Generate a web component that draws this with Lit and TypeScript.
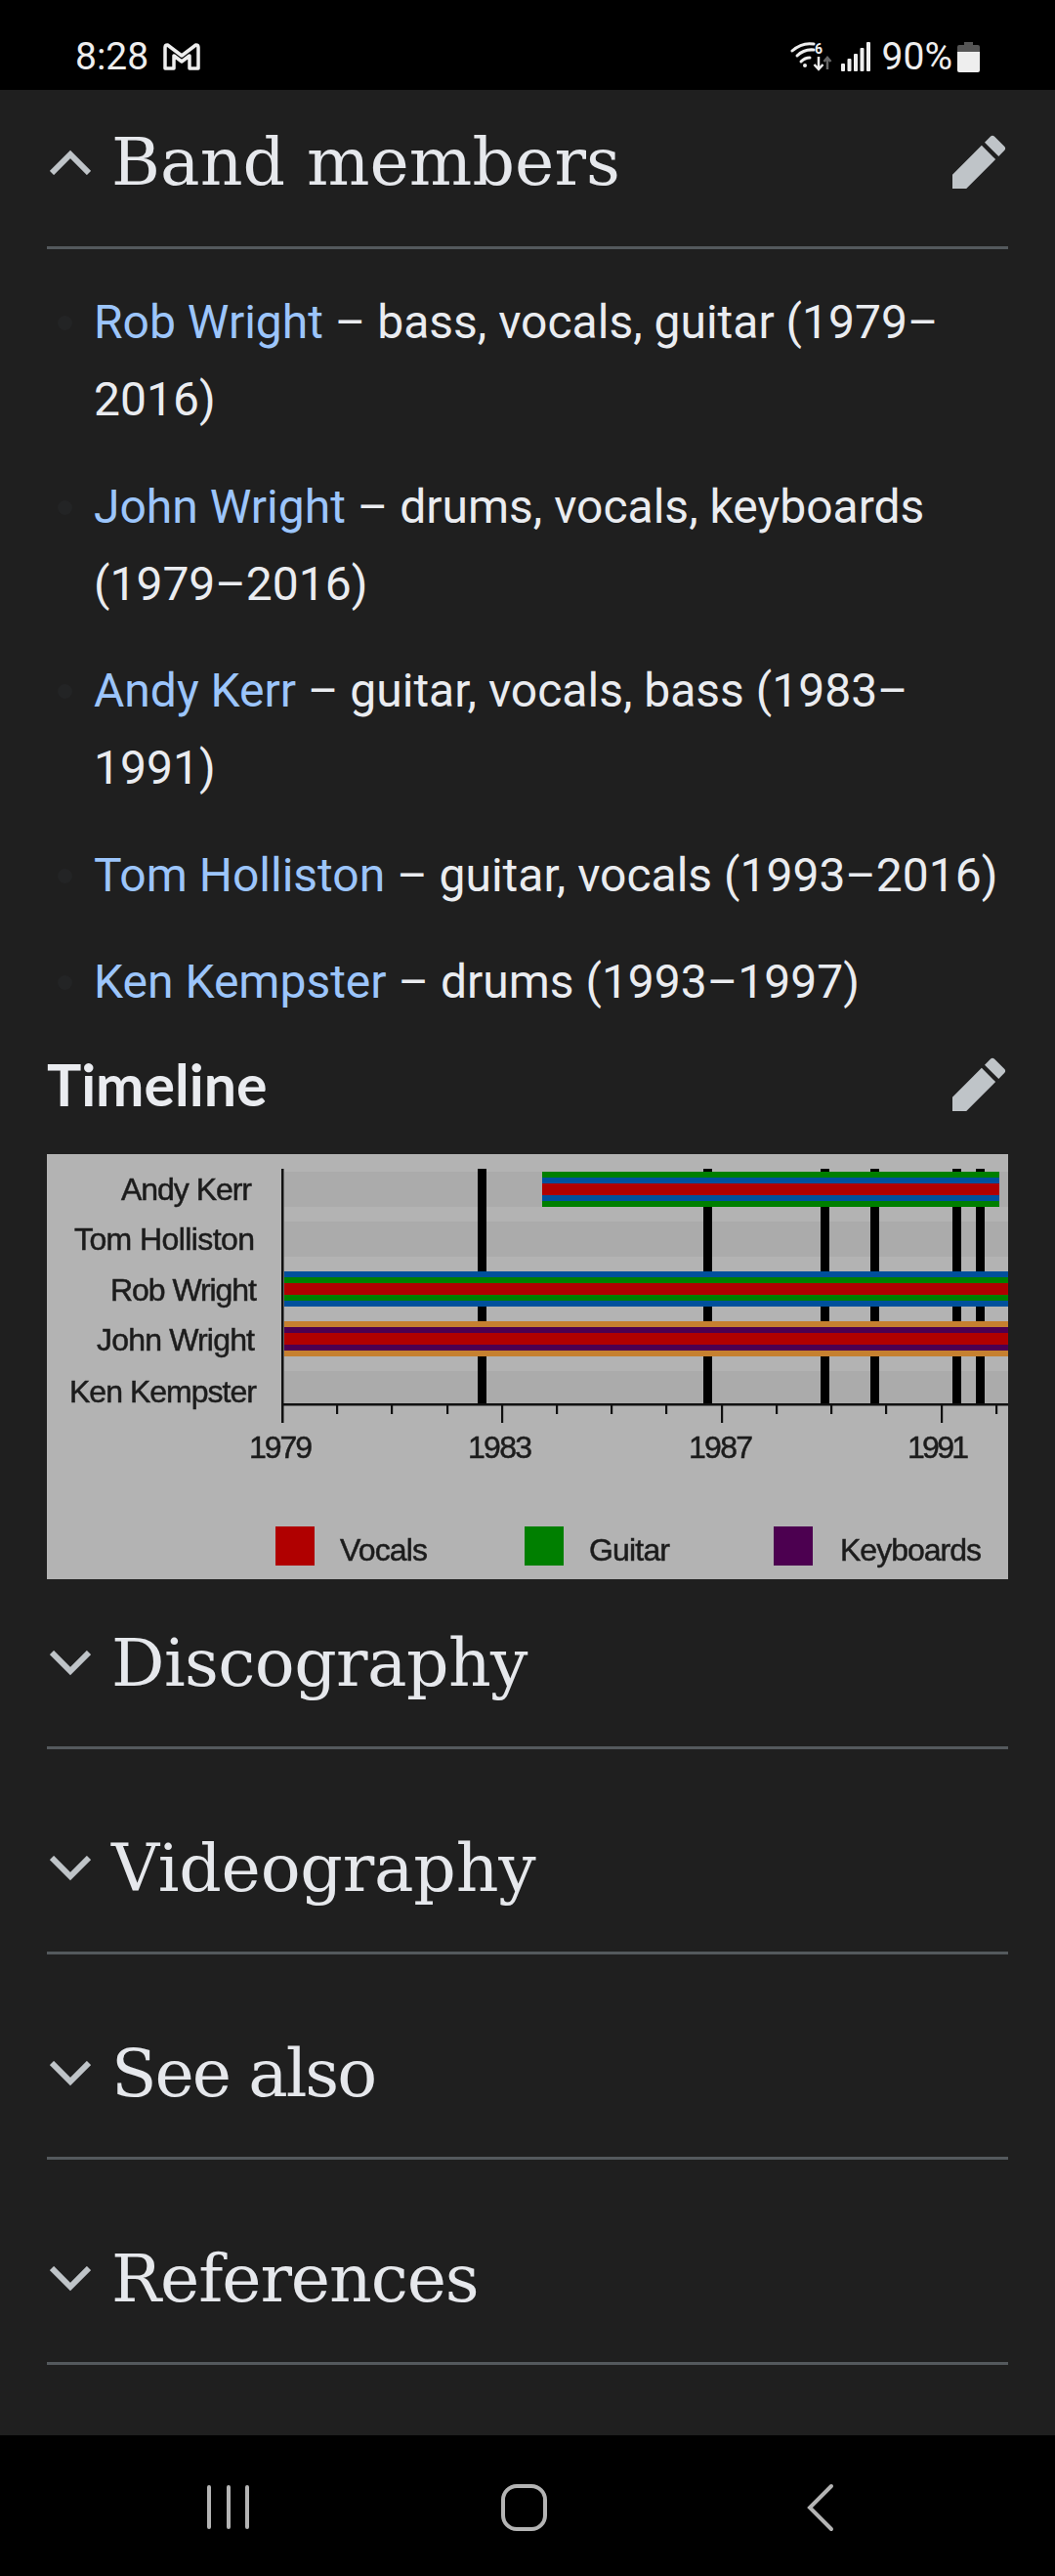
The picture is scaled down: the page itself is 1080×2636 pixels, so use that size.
import { LitElement, html, css, svg } from "lit";
import { customElement } from "lit/decorators.js";

const PENCIL = html`<svg class="pencil" viewBox="0 0 20 20"><path fill="#bfc4c8" d="M16.77 8l1.94-2a1 1 0 000-1.41l-3.34-3.3a1 1 0 00-1.41 0L12 3.23zm-5.81-3.71L1 14.25V19h4.75l9.96-9.96z"/></svg>`;
const chevron = (up: boolean) => html`<svg class="chev" viewBox="0 0 42 26"><path fill="none" stroke="#bfc4c8" stroke-width="6" d="${up ? "M2 24 21 5 40 24" : "M2 2 21 21 40 2"}"/></svg>`;

const members: [string, string][] = [
  ["Rob Wright", " – bass, vocals, guitar (1979–2016)"],
  ["John Wright", " – drums, vocals, keyboards (1979–2016)"],
  ["Andy Kerr", " – guitar, vocals, bass (1983–1991)"],
  ["Tom Holliston", " – guitar, vocals (1993–2016)"],
  ["Ken Kempster", " – drums (1993–1997)"],
];

const RED = "#b00000", GREEN = "#007f00", BLUE = "#00509c", ORANGE = "#c6802f", PURPLE = "#4c0050";
const stripes = (x: number, w: number, y: number, c: string[]) => {
  const hs = [6, 6, 12, 6, 6];
  let yy = y;
  return c.map((col, i) => {
    const r = svg`<rect x=${x} y=${yy} width=${w} height=${hs[i]} fill=${col} />`;
    yy += hs[i];
    return r;
  });
};
const names: [string, number, number][] = [
  ["Andy Kerr", 76, 47], ["Tom Holliston", 28, 98], ["Rob Wright", 65, 150], ["John Wright", 51, 201], ["Ken Kempster", 23, 254],
];
const nameW = [134, 185, 150, 162, 192];
const years: [string, number, number][] = [["1979", 207, 65], ["1983", 431, 66], ["1987", 657, 66], ["1991", 881, 63]];
const legend: [string, string, number, number, number][] = [
  ["Vocals", RED, 234, 300, 90], ["Guitar", GREEN, 489, 555, 83], ["Keyboards", PURPLE, 744, 812, 145],
];

const chart = html`<svg class="chart" viewBox="0 0 984 435" role="img">
  ${[[18, 36], [69, 36], [222, 34]].map(([y, h]) => svg`<rect x="243" y=${y} width="741" height=${h} fill="#ababab" />`)}
  ${[441, 672, 792, 843, 927, 951].map((x) => svg`<rect x=${x} y="15" width="9" height="241" fill="#000" />`)}
  ${stripes(507, 468, 18, [GREEN, BLUE, RED, BLUE, GREEN])}
  ${stripes(243, 741, 120, [BLUE, GREEN, RED, GREEN, BLUE])}
  ${stripes(243, 741, 171, [ORANGE, PURPLE, RED, PURPLE, ORANGE])}
  <rect x="240" y="15" width="2.5" height="260" fill="#111" />
  <rect x="240" y="255" width="744" height="2.5" fill="#111" />
  ${[297, 353, 410, 466, 522, 578, 634, 691, 747, 803, 859, 916, 972].map((x, i) =>
    svg`<rect x=${x - 1} y="256" width="2.2" height=${i === 3 || i === 7 || i === 11 ? 19 : 10} fill="#111" />`)}
  ${names.map(([t, x, y], i) => svg`<text class="ct" x=${x} y=${y} textLength=${nameW[i]} lengthAdjust="spacing">${t}</text>`)}
  ${years.map(([t, x, w]) => svg`<text class="ct" x=${x} y="311" textLength=${w} lengthAdjust="spacing">${t}</text>`)}
  ${legend.map(([t, c, sx, tx, w]) => svg`<rect x=${sx} y="381" width="40" height="40" fill=${c} />
    <text class="ct" x=${tx} y="416" textLength=${w} lengthAdjust="spacing">${t}</text>`)}
</svg>`;

const title = (t: string, tracking: number) => html`<h2 style="letter-spacing:${tracking}px">${t}</h2>`;
const closed: [string, number][] = [["Videography", -0.2], ["See also", -2.1], ["References", -1.1]];

@customElement("app-root")
export class AppRoot extends LitElement {
  static styles = css`
    :host { display: block; width: 1080px; height: 2636px; background: #000; overflow: hidden; }
    .page { display: flex; flex-direction: column; height: 2636px; }

    .status { height: 92px; flex: none; background: #000; color: #eee; display: flex; align-items: center;
      justify-content: space-between; padding: 24px 77px 0 77px; box-sizing: border-box;
      font: 400 39px/1 Roboto, sans-serif; }
    .status-l, .status-r { display: flex; align-items: center; }
    .gmail { width: 38px; height: 28px; margin-left: 15px; }
    .wifi { width: 46px; height: 32px; margin-right: 6px; }
    .six { font: 700 14px Roboto, sans-serif; }
    .signal { width: 30px; height: 30px; margin-right: 12px; }
    .batt { width: 23px; height: 31px; margin-left: 5px; }

    .main { flex: 1; background: #1f1f1f; padding: 0 48px; box-sizing: border-box; }
    .head { display: flex; align-items: center; height: 171px; box-sizing: border-box;
      color: #e6e8ec; }
    .head.first { height: 160px; padding-bottom: 12px; }
    .rule { height: 3px; background: #54595d; }
    .chev { width: 42px; height: 26px; flex: none; margin: 0 21px 0 3px; }
    h2 { flex: 1; margin: 0; font: 400 68px/1 "DejaVu Serif", serif; }
    .pencil { width: 60px; height: 60px; flex: none; display: block; }
    .section { margin-top: 36px; }
    .section.tight { margin-top: 0; }

    ul { margin: 35px 0 0; padding: 0 0 0 48px; list-style: disc;
      font: 400 48px/79px Roboto, sans-serif; color: #eaecf0; }
    li { margin-bottom: 30.5px; }
    li:last-child { margin-bottom: 0; }
    li::marker { color: #232425; }
    a { color: #9cc5fb; text-decoration: none; }

    .tl-head { display: flex; align-items: center; justify-content: space-between; height: 92px; margin-top: 20px; }
    h3 { margin: 0 0 2px; font: 700 59px/1 Lato, sans-serif; color: #eaecf0; }
    .chart-wrap { margin-top: 25px; height: 435px; background: #b3b3b3; overflow: hidden; }
    .chart { display: block; width: 984px; height: 435px; filter: blur(0.7px); }
    .ct { font: 400 32px "Liberation Sans", sans-serif; fill: #1c1c1c; stroke: #1c1c1c; stroke-width: 0.5px; }

    .nav { height: 144px; flex: none; background: #000; display: flex; align-items: center; }
    .nav svg { display: block; width: 1080px; height: 144px; }
  `;

  render() {
    return html`<div class="page">
      <div class="status">
        <div class="status-l">
          <span>8:28</span>
          <svg class="gmail" viewBox="0 0 38 28"><path fill="none" stroke="#eee" stroke-width="3.5" stroke-linejoin="round" d="M2 26V4.500Q2 2 4.500 2L19 13 33.500 2Q36 2 36 4.500V26H27V13L19 19 11 13V26Z"/></svg>
        </div>
        <div class="status-r">
          <svg class="wifi" viewBox="0 0 46 32">
            <g fill="none" stroke="#eee" stroke-width="3" stroke-linecap="round">
              <path d="M2 10Q12 1 24 3"/><path d="M7 15Q14 8 24 9"/><path d="M11 21Q15 17 20 17"/>
            </g>
            <circle cx="15" cy="25" r="2" fill="#eee"/>
            <text x="25" y="13" fill="#eee" class="six">6</text>
            <path d="M29 16v12M24.500 24l4.500 5 4.500-5" fill="none" stroke="#eee" stroke-width="2.500"/>
            <path d="M38 29V17M34.500 21l3.500-4 3.500 4" fill="none" stroke="#666" stroke-width="2.500"/>
          </svg>
          <svg class="signal" viewBox="0 0 30 30" fill="#eee">
            <rect x="0" y="22" width="4" height="8" rx="1"/><rect x="6.500" y="17" width="4" height="13" rx="1"/>
            <rect x="13" y="12" width="4" height="18" rx="1"/><rect x="19.500" y="6" width="4" height="24" rx="1"/>
            <rect x="26" y="0" width="4" height="30" rx="1"/>
          </svg>
          <span>90%</span>
          <svg class="batt" viewBox="0 0 23 31">
            <path fill="#555" d="M7 0h9v3h5q2 0 2 2v5H0V5q0-2 2-2h5z"/>
            <path fill="#eee" d="M0 10h23v19q0 2-2 2H2q-2 0-2-2z"/>
          </svg>
        </div>
      </div>

      <div class="main">
        <div class="section tight">
          <div class="head first">${chevron(true)}${title("Band members", 0.1)}${PENCIL}</div>
          <div class="rule"></div>
        </div>
        <ul>
          ${members.map(([n, r]) => html`<li><a>${n}</a>${r}</li>`)}
        </ul>
        <div class="tl-head"><h3>Timeline</h3>${PENCIL}</div>
        <div class="chart-wrap">${chart}</div>
        <div class="section tight">
          <div class="head">${chevron(false)}${title("Discography", -0.6)}</div><div class="rule"></div>
        </div>
        ${closed.map(([t, k]) => html`<div class="section">
          <div class="head">${chevron(false)}${title(t, k)}</div><div class="rule"></div>
        </div>`)}
      </div>

      <div class="nav">
        <svg viewBox="0 0 1080 144">
          <g fill="none" stroke="#b4b4b4" stroke-width="4" stroke-linecap="round">
            <path d="M214 53V94M234 53V94M253 53V94"/>
            <rect x="515" y="52" width="43" height="44" rx="14"/>
            <path d="M851 52 829 74 851 96"/>
          </g>
        </svg>
      </div>
    </div>`;
  }
}
